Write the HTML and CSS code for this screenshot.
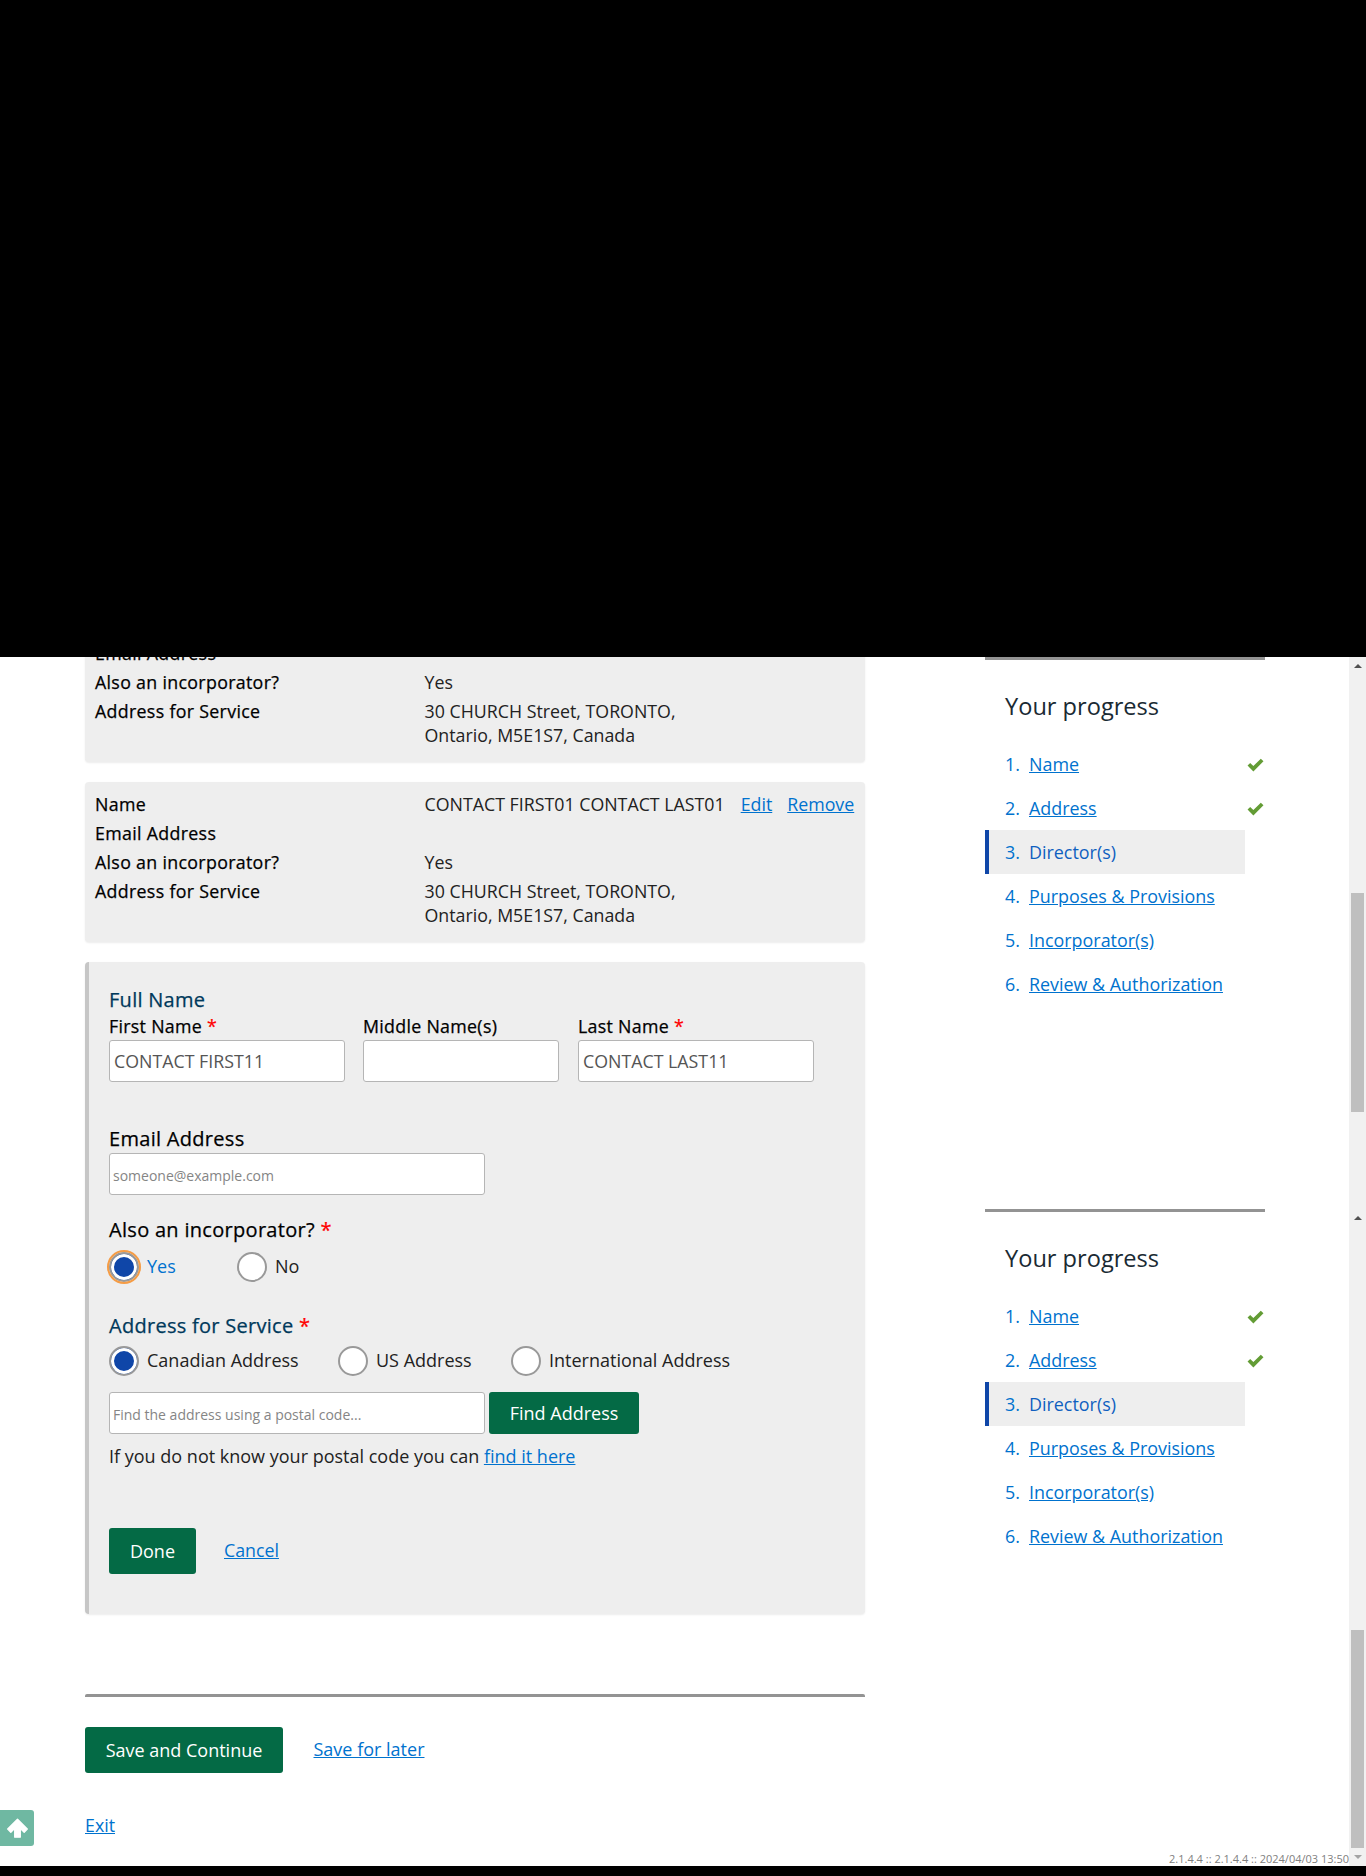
FILE: index.html
```html
<!DOCTYPE html>
<html lang="en">
<head>
    <meta charset="UTF-8">
    <title>Director(s)</title>
    <link rel="stylesheet" href="styles.css">
</head>
<body>
    <div class="blackout"></div>

    <div class="page">
        <div class="main">
            <!-- Added directors -->
            <div class="card card-first">
                <div class="row"><span class="key">Email Address</span><span class="val"></span></div>
                <div class="row"><span class="key">Also an incorporator?</span><span class="val">Yes</span></div>
                <div class="row"><span class="key">Address for Service</span><span class="val">30 CHURCH Street, TORONTO,<br>Ontario, M5E1S7, Canada</span></div>
            </div>
            <div class="card">
                <div class="row">
                    <span class="key">Name</span>
                    <span class="val">CONTACT FIRST01 CONTACT LAST01</span>
                    <a href="#" class="row-link">Edit</a>
                    <a href="#" class="row-link">Remove</a>
                </div>
                <div class="row"><span class="key">Email Address</span><span class="val"></span></div>
                <div class="row"><span class="key">Also an incorporator?</span><span class="val">Yes</span></div>
                <div class="row"><span class="key">Address for Service</span><span class="val">30 CHURCH Street, TORONTO,<br>Ontario, M5E1S7, Canada</span></div>
            </div>

            <!-- Director form -->
            <div class="form-card">
                <div class="section-title">Full Name</div>
                <div class="name-fields">
                    <div class="field field-first">
                        <label>First Name <span class="req">*</span></label>
                        <input type="text" value="CONTACT FIRST11">
                    </div>
                    <div class="field field-middle">
                        <label>Middle Name(s)</label>
                        <input type="text">
                    </div>
                    <div class="field field-last">
                        <label>Last Name <span class="req">*</span></label>
                        <input type="text" value="CONTACT LAST11">
                    </div>
                </div>

                <div class="email-field">
                    <label>Email Address</label>
                    <input type="text" class="wide-input" placeholder="someone@example.com">
                </div>

                <div class="group-label">Also an incorporator? <span class="req">*</span></div>
                <div class="radios radios-yesno">
                    <div class="radio-item radio-yes"><span class="radio on focus"></span><span class="radio-text radio-yes-text">Yes</span></div>
                    <div class="radio-item"><span class="radio"></span><span class="radio-text">No</span></div>
                </div>

                <div class="section-title address-title">Address for Service <span class="req">*</span></div>
                <div class="radios radios-address">
                    <div class="radio-item"><span class="radio on"></span><span class="radio-text">Canadian Address</span></div>
                    <div class="radio-item"><span class="radio"></span><span class="radio-text">US Address</span></div>
                    <div class="radio-item"><span class="radio"></span><span class="radio-text">International Address</span></div>
                </div>

                <div class="find-row">
                    <input type="text" class="wide-input" placeholder="Find the address using a postal code...">
                    <button class="btn btn-find">Find Address</button>
                </div>
                <p class="hint">If you do not know your postal code you can <a href="#">find it here</a></p>

                <div class="form-actions">
                    <button class="btn btn-done">Done</button>
                    <a href="#">Cancel</a>
                </div>
            </div>

            <hr class="divider">

            <div class="page-actions">
                <button class="btn btn-save">Save and Continue</button>
                <a href="#">Save for later</a>
            </div>
            <div class="exit"><a href="#">Exit</a></div>
        </div>

        <div class="side">
            <div class="side-pane side-pane-top">
                <div class="progress">
                    <h2>Your progress</h2>
                    <ol>
                        <li><span class="num">1.</span><a href="#">Name</a><svg class="tick" viewBox="0 0 16 13"><path d="M.5 7L3 4.5l3 3L13 .5 15.5 3 6 12.5z"/></svg></li>
                        <li><span class="num">2.</span><a href="#">Address</a><svg class="tick" viewBox="0 0 16 13"><path d="M.5 7L3 4.5l3 3L13 .5 15.5 3 6 12.5z"/></svg></li>
                        <li class="current"><span class="num">3.</span>Director(s)</li>
                        <li><span class="num">4.</span><a href="#">Purposes &amp; Provisions</a></li>
                        <li><span class="num">5.</span><a href="#">Incorporator(s)</a></li>
                        <li><span class="num">6.</span><a href="#">Review &amp; Authorization</a></li>
                    </ol>
                </div>
                <div class="scrollbar">
                    <span class="arrow-up"></span>
                    <span class="thumb thumb-top"></span>
                </div>
            </div>
            <div class="side-pane side-pane-bottom">
                <div class="progress">
                    <h2>Your progress</h2>
                    <ol>
                        <li><span class="num">1.</span><a href="#">Name</a><svg class="tick" viewBox="0 0 16 13"><path d="M.5 7L3 4.5l3 3L13 .5 15.5 3 6 12.5z"/></svg></li>
                        <li><span class="num">2.</span><a href="#">Address</a><svg class="tick" viewBox="0 0 16 13"><path d="M.5 7L3 4.5l3 3L13 .5 15.5 3 6 12.5z"/></svg></li>
                        <li class="current"><span class="num">3.</span>Director(s)</li>
                        <li><span class="num">4.</span><a href="#">Purposes &amp; Provisions</a></li>
                        <li><span class="num">5.</span><a href="#">Incorporator(s)</a></li>
                        <li><span class="num">6.</span><a href="#">Review &amp; Authorization</a></li>
                    </ol>
                </div>
                <div class="scrollbar">
                    <span class="arrow-up"></span>
                    <span class="thumb thumb-bottom"></span>
                    <span class="arrow-down"></span>
                </div>
                <div class="version">2.1.4.4 :: 2.1.4.4 :: 2024/04/03 13:50</div>
            </div>
        </div>

        <a href="#" class="to-top">
            <svg viewBox="0 0 20 20" width="23" height="23"><path d="M10 2L18.5 10.5 15.8 13.2 12.4 9.8V17.5H7.6V9.8L4.2 13.2 1.5 10.5z" fill="#fff" stroke="#fff" stroke-width="1.2" stroke-linejoin="round"/></svg>
        </a>
    </div>

    <div class="blackout-bottom"></div>
</body>
</html>
```

FILE: styles.css
```css
* {
    box-sizing: border-box;
}
body {
    margin: 0;
    font-family: "Open Sans", sans-serif;
    font-size: 17.8px;
    color: #222;
    background-color: #fff;
}
a {
    color: #0072ce;
}
.blackout {
    height: 657px;
    background-color: #000;
    position: relative;
    z-index: 2;
}
.blackout-bottom {
    height: 10px;
    background-color: #000;
}
.page {
    display: flex;
    height: 1209px;
    position: relative;
    overflow: hidden;
}

/* Main column */
.main {
    width: 780px;
    margin-left: 85px;
    flex: none;
}
.card {
    background-color: #eee;
    border-radius: 4px;
    padding: 10px 10px 10px;
    margin-bottom: 20px;
    box-shadow: 0 1px 2px rgba(0, 0, 0, 0.08);
}
.card-first {
    margin-top: -26px;
}
.row {
    display: flex;
    line-height: 24px;
    margin-bottom: 5px;
}
.key {
    width: 329.5px;
    flex: none;
    color: #000;
    -webkit-text-stroke: 0.25px #000;
    letter-spacing: 0.32px;
}
.row-link {
    margin-left: 16px;
}
.row-link + .row-link {
    margin-left: 15px;
}

/* Form */
.form-card {
    background-color: #eee;
    border-left: 4px solid #c6c6c6;
    border-radius: 4px;
    padding: 25px 20px 40px 20px;
    box-shadow: 0 1px 2px rgba(0, 0, 0, 0.08);
}
.section-title {
    color: #00395b;
    font-size: 20px;
    -webkit-text-stroke: 0.25px #00395b;
    letter-spacing: 0.28px;
    line-height: 26px;
}
.req {
    color: #f00;
    -webkit-text-stroke: 0.25px #f00;
}
label,
.group-label {
    display: block;
    color: #000;
    -webkit-text-stroke: 0.25px #000;
    letter-spacing: 0.3px;
}
.name-fields {
    display: flex;
}
.field label {
    line-height: 27px;
}
.field input {
    width: 100%;
    padding: 0 4px 1px;
}
.field-first {
    width: 236px;
    margin-right: 18px;
}
.field-middle {
    width: 196px;
    margin-right: 19px;
}
.field-last {
    width: 236px;
}
input {
    display: block;
    height: 42px;
    border: 1px solid #b5b5b5;
    border-radius: 3px;
    background-color: #fff;
    font-family: "Open Sans", sans-serif;
    font-size: 17.8px;
    color: #555;
}
.wide-input {
    width: 376px;
    font-size: 14px;
    padding: 3px 3px 0;
}
.wide-input::placeholder {
    color: #858585;
}
.email-field {
    margin-top: 44px;
}
.email-field label {
    font-size: 20px;
    line-height: 26px;
    margin-bottom: 1px;
}
.group-label {
    font-size: 20px;
    line-height: 26px;
    margin-top: 22px;
}
.radios {
    display: flex;
    margin-top: 9px;
}
.radio-item {
    display: flex;
    align-items: center;
    height: 30px;
    line-height: 30px;
    font-size: 18px;
}
.radio-text {
    padding-bottom: 2px;
}
.radio {
    width: 30px;
    height: 30px;
    border: 2px solid #999;
    border-radius: 50%;
    background-color: #fff;
    margin-right: 8px;
    flex: none;
}
.radio.on {
    background-color: #0f46a8;
    box-shadow: inset 0 0 0 3px #fff;
}
.radio.focus {
    outline: 2px solid #f59c45;
    outline-offset: 0;
}
.radio-yes {
    width: 128px;
}
.radio-yes-text {
    color: #0072ce;
}
.radios-address {
    margin-top: 7px;
}
.radios-address .radio-item:nth-child(1) {
    width: 229px;
}
.radios-address .radio-item:nth-child(2) {
    width: 173px;
}
.address-title {
    margin-top: 31px;
}
.find-row {
    display: flex;
    margin-top: 16px;
}
.btn {
    border: none;
    border-radius: 3px;
    background-color: #046a45;
    color: #fff;
    font-family: "Open Sans", sans-serif;
    font-size: 18px;
    cursor: pointer;
}
.btn-find {
    width: 150px;
    height: 42px;
    margin-left: 4px;
}
.hint {
    margin: 10px 0 0;
    font-size: 18px;
    line-height: 24px;
}
.form-actions {
    display: flex;
    align-items: center;
    margin-top: 60px;
}
.form-actions a {
    margin-left: 28px;
    margin-bottom: 2px;
}
.btn-done {
    width: 87px;
    height: 46px;
}
.divider {
    height: 3px;
    border: none;
    border-radius: 2px 2px 0 0;
    background-color: #939393;
    margin: 80px 0 0;
}
.page-actions {
    display: flex;
    align-items: center;
    margin-top: 30px;
}
.page-actions a {
    margin-left: 30.5px;
    margin-bottom: 2px;
    font-size: 18px;
}
.btn-save {
    width: 198px;
    height: 46px;
}
.exit {
    margin-top: 40px;
    line-height: 24px;
}

/* Progress sidebar */
.side {
    flex: 1;
    display: flex;
    flex-direction: column;
}
.side-pane {
    display: flex;
    flex: none;
    position: relative;
}
.side-pane-top {
    height: 552px;
}
.side-pane-bottom {
    height: 657px;
}
.progress {
    width: 280px;
    margin-left: 120px;
    margin-right: 84px;
    flex: none;
    border-top: 3px solid #939393;
}
.progress h2 {
    margin: 31px 0 21px 20px;
    font-size: 23.6px;
    font-weight: 400;
    line-height: 30px;
    color: #1a2a33;
}
.progress ol {
    list-style: none;
    margin: 0;
    padding: 0;
}
.progress li {
    display: flex;
    align-items: center;
    position: relative;
    width: 260px;
    height: 44px;
    padding-left: 20px;
    color: #0f5fc0;
    font-size: 17.9px;
}
.progress li a {
    color: #0072ce;
}
.progress li.current {
    background-color: #eee;
    border-left: 4px solid #0f46a8;
    padding-left: 16px;
}
.num {
    width: 24px;
    color: #0072ce;
}
.tick {
    position: absolute;
    left: 262px;
    top: 15.5px;
    width: 17px;
    height: 14px;
    fill: #639c35;
}
.scrollbar {
    width: 17px;
    flex: none;
    background-color: #f1f1f1;
    position: relative;
}
.arrow-up {
    position: absolute;
    top: 7px;
    left: 5px;
    border-left: 4px solid transparent;
    border-right: 4px solid transparent;
    border-bottom: 4px solid #505050;
}
.arrow-down {
    position: absolute;
    bottom: 7px;
    left: 5px;
    border-left: 4px solid transparent;
    border-right: 4px solid transparent;
    border-top: 4px solid #a3a3a3;
}
.thumb {
    position: absolute;
    left: 2px;
    width: 13px;
    background-color: #bfbfbf;
}
.thumb-top {
    top: 236px;
    height: 219px;
}
.thumb-bottom {
    top: 421px;
    bottom: 18px;
}
.version {
    position: absolute;
    right: 17px;
    bottom: 0;
    font-size: 11px;
    line-height: 14px;
    color: #808080;
}
.to-top {
    position: absolute;
    left: 0;
    top: 1153px;
    width: 34px;
    height: 36px;
    border-radius: 0 3px 3px 0;
    background-color: #6fb8a2;
    display: flex;
    align-items: center;
    justify-content: center;
}
```
